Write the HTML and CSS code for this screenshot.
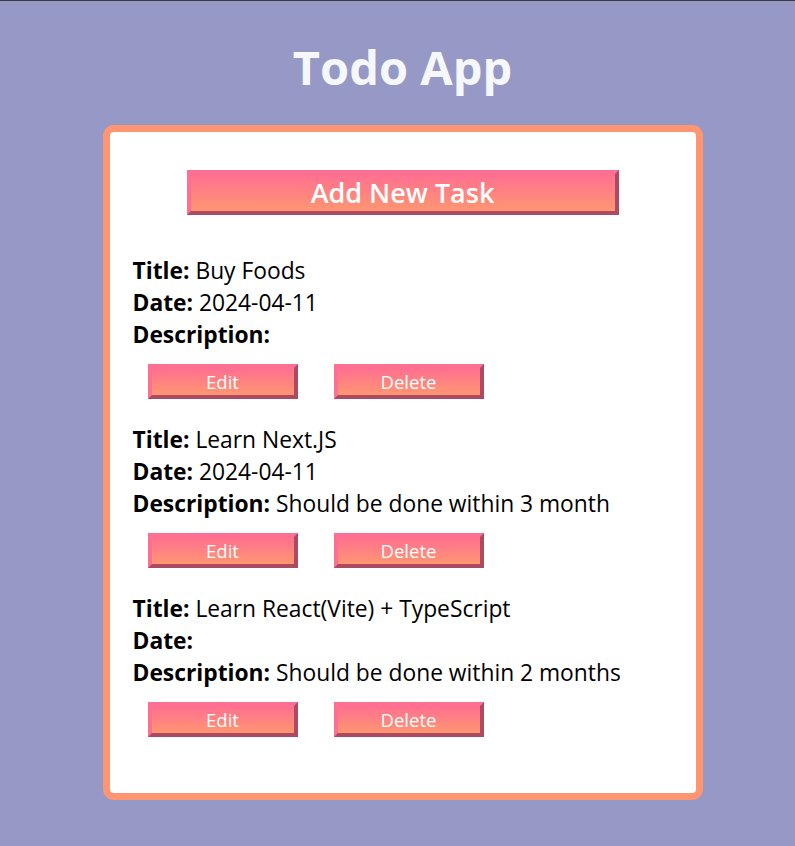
FILE: index.html
```html
<!DOCTYPE html>
<html lang="en">
<head>
<meta charset="utf-8">
<title>Todo App</title>
<link rel="stylesheet" href="styles.css">
</head>
<body>
<div class="page">
  <h1 class="app-title">Todo App</h1>
  <div class="card">
    <div class="add-row">
      <button class="btn btn-add">Add New Task</button>
    </div>
    <div class="task">
      <p class="line"><b>Title:</b> Buy Foods</p>
      <p class="line"><b>Date:</b> 2024-04-11</p>
      <p class="line"><b>Description:</b> </p>
      <div class="actions">
        <button class="btn btn-small">Edit</button>
        <button class="btn btn-small">Delete</button>
      </div>
    </div>
    <div class="task">
      <p class="line"><b>Title:</b> Learn Next.JS</p>
      <p class="line"><b>Date:</b> 2024-04-11</p>
      <p class="line"><b>Description:</b> Should be done within 3 month</p>
      <div class="actions">
        <button class="btn btn-small">Edit</button>
        <button class="btn btn-small">Delete</button>
      </div>
    </div>
    <div class="task">
      <p class="line"><b>Title:</b> Learn React(Vite) + TypeScript</p>
      <p class="line"><b>Date:</b> </p>
      <p class="line"><b>Description:</b> Should be done within 2 months</p>
      <div class="actions">
        <button class="btn btn-small">Edit</button>
        <button class="btn btn-small">Delete</button>
      </div>
    </div>
  </div>
</div>
</body>
</html>
```

FILE: styles.css
```css
html, body {
  margin: 0;
  padding: 0;
}
body {
  background: #9698c6;
  border-top: 1px solid #3b3b3b;
  min-height: 845px;
  font-family: "Open Sans", "Noto Sans", sans-serif;
}
.page {
  padding: 0 0 0 10px;
  display: flex;
  flex-direction: column;
  align-items: center;
}
.app-title {
  margin: 0;
  padding-top: 34px;
  height: 90px;
  box-sizing: border-box;
  font-size: 47px;
  line-height: 64px;
  font-weight: 700;
  color: #f5f7fa;
  text-align: center;
}
.card {
  width: 600px;
  box-sizing: border-box;
  background: #fff;
  border: 7px solid #ff9671;
  border-radius: 11px;
  padding: 38px 23px 31px;
  margin-top: 34px;
}
.add-row {
  display: flex;
  justify-content: center;
  margin-bottom: 40px;
}
.btn {
  font-family: "Open Sans", "Noto Sans", sans-serif;
  color: #fff;
  background: linear-gradient(to bottom, #ff6f91, #ff9671);
  border-style: solid;
  border-width: 4px;
  border-color: #ff6f91 #ab4a61 #ab4a61 #ff6f91;
  padding: 0;
  cursor: pointer;
}
.btn-add {
  width: 432px;
  height: 45px;
  font-size: 27px;
  font-weight: 600;
  line-height: 34px;
}
.task {
  margin-bottom: 25px;
}
.line {
  margin: 0;
  font-size: 22.8px;
  line-height: 32px;
  color: #000;
}
.line b {
  font-weight: 700;
}
.actions {
  display: flex;
  gap: 36px;
  margin-top: 13px;
  padding-left: 15px;
}
.btn-small {
  width: 150px;
  height: 35px;
  font-size: 18.5px;
  line-height: 27px;
}
```
